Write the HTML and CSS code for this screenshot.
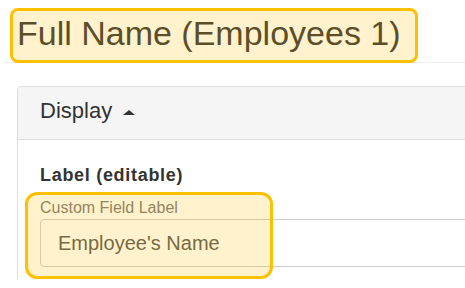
FILE: index.html
```html
<!DOCTYPE html>
<html lang="en">
<head>
    <meta charset="UTF-8">
    <meta name="viewport" content="width=device-width, initial-scale=1.0">
    <title>Full Name (Employees 1)</title>
    <link rel="stylesheet" href="styles.css">
</head>
<body>

    <div class="page">
        <h1 class="page-title"><span class="mark mark-title">Full Name (Employees 1)</span></h1>
        <hr class="divider">

        <div class="panel">
            <div class="panel-heading">
                Display <span class="caret"></span>
            </div>
            <div class="panel-body">
                <h3 class="section-label">Label (editable)</h3>
                <div class="field mark mark-field">
                    <label for="field-label">Custom Field Label</label>
                    <input type="text" id="field-label" value="Employee's Name">
                </div>
            </div>
        </div>
    </div>

</body>
</html>
```

FILE: styles.css
```css
body {
    margin: 0;
    font-family: "Liberation Sans", Arial, sans-serif;
    color: #333;
    background: white;
    overflow: hidden;
}

.page {
    width: 700px;
    height: 280px;
    padding-left: 4px;
    overflow: hidden;
}

.page-title {
    margin: 14px 0 10px 13px;
    font-size: 34px;
    font-weight: normal;
    line-height: 38px;
}

.divider {
    margin: 0;
    border: none;
    border-top: 1px solid #eee;
}

/* Yellow annotation boxes drawn over the content */
.mark {
    position: relative;
}

.mark::after {
    content: "";
    position: absolute;
    box-sizing: border-box;
    background: rgba(255, 192, 0, 0.2);
    border: 3px solid #ffc000;
    pointer-events: none;
}

.mark-title {
    display: inline-block;
}

.mark-title::after {
    left: -7px;
    top: -6px;
    width: 408px;
    height: 55px;
    border-radius: 8px;
}

.mark-field::after {
    left: -15px;
    top: -7px;
    width: 248px;
    height: 87px;
    border-radius: 12px;
}

.panel {
    margin: 23px 0 0 13px;
    border: 1px solid #ddd;
    border-radius: 4px;
}

.panel-heading {
    padding: 12px 22px 16px;
    font-size: 22px;
    line-height: 24px;
    background: #f5f5f5;
    border-bottom: 1px solid #ddd;
    border-radius: 4px 4px 0 0;
}

.caret {
    display: inline-block;
    margin-left: 5px;
    vertical-align: middle;
    border-left: 6px solid transparent;
    border-right: 6px solid transparent;
    border-bottom: 5px solid #333;
}

.panel-body {
    padding: 25px 22px 40px;
}

.section-label {
    margin: 0 0 14px;
    font-size: 18px;
    line-height: 20px;
    letter-spacing: 0.7px;
}

.field label {
    display: block;
    margin-bottom: 2px;
    font-size: 16px;
    line-height: 18px;
    color: #777;
}

.field input {
    width: 560px;
    height: 48px;
    padding: 0 17px;
    font-family: inherit;
    font-size: 20px;
    color: #555;
    border: 1px solid #ccc;
    border-radius: 4px;
    box-sizing: border-box;
}
```
